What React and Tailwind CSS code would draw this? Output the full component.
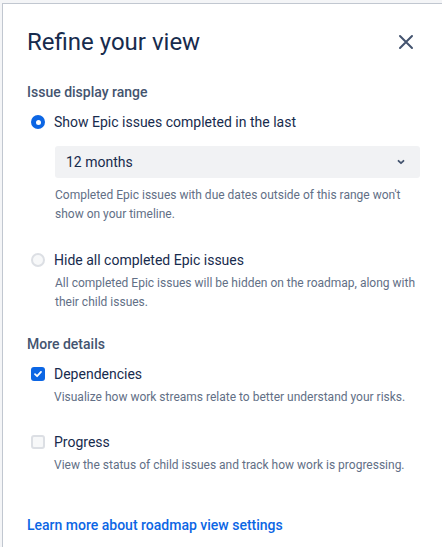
import React from "react";

const font = { fontFamily: 'Roboto, "Liberation Sans", sans-serif' };

function Radio({ checked }) {
  return checked ? (
    <span className="flex h-[14px] w-[14px] items-center justify-center rounded-full bg-[#0c66e4]">
      <span className="h-[5px] w-[5px] rounded-full bg-white" />
    </span>
  ) : (
    <span className="h-[14px] w-[14px] rounded-full border-2 border-[#dcdfe4] bg-[#f7f8f9]" />
  );
}

function Checkbox({ checked }) {
  return checked ? (
    <span className="flex h-[14px] w-[14px] items-center justify-center rounded-[3px] bg-[#0c66e4]">
      <svg width="10" height="10" viewBox="0 0 10 10" fill="none">
        <path d="M2 5.2 4.1 7.2 8 2.9" stroke="white" strokeWidth="1.8" strokeLinecap="round" strokeLinejoin="round" />
      </svg>
    </span>
  ) : (
    <span className="h-[14px] w-[14px] rounded-[3px] border-2 border-[#dcdfe4] bg-[#f7f8f9]" />
  );
}

function OptionRow({ control, label }) {
  return (
    <div className="flex h-[20px] items-center">
      <div className="flex w-[27px] items-center pl-[4px]">{control}</div>
      <span className="text-[14px] leading-[20px] text-[#172b4d]">{label}</span>
    </div>
  );
}

function Helper({ children, className = "" }) {
  return (
    <p className={"pl-[27px] text-[12px] leading-[19px] text-[#626f86] " + className}>
      {children}
    </p>
  );
}

export default function App() {
  return (
    <div className="h-[547px] w-[442px] overflow-hidden bg-[#f4f5f7] pt-[3px] pl-[2px]" style={font}>
      <div className="h-full border-t border-l border-[#c1c7d0] bg-white pl-[24px] pr-[22px] pt-[22px]">
        {/* header */}
        <div className="flex h-[32px] items-center justify-between">
          <h1 className="text-[24px] leading-[32px] font-normal text-[#172b4d]">Refine your view</h1>
          <button type="button" className="mr-[6px] text-[#44546f]">
            <svg width="16" height="16" viewBox="0 0 16 16" fill="none">
              <path d="M2 2 14 14M14 2 2 14" stroke="currentColor" strokeWidth="2" strokeLinecap="round" />
            </svg>
          </button>
        </div>

        {/* issue display range */}
        <h2 className="mt-[24px] text-[14px] leading-[20px] font-medium text-[#44546f]">Issue display range</h2>
        <div className="mt-[10px]">
          <OptionRow control={<Radio checked />} label="Show Epic issues completed in the last" />
        </div>
        <div className="mt-[14px] ml-[28px] flex h-[32px] items-center justify-between rounded-[3px] bg-[#f1f2f4] pl-[11px] pr-[14px]">
          <span className="text-[14px] text-[#172b4d]">12 months</span>
          <svg width="10" height="10" viewBox="0 0 10 10" fill="none">
            <path d="M2.5 3.8 5 6.2 7.5 3.8" stroke="#44546f" strokeWidth="1.8" strokeLinecap="round" strokeLinejoin="round" />
          </svg>
        </div>
        <Helper className="mt-[8px] ml-[1px]">
          Completed Epic issues with due dates outside of this range won't show on your timeline.
        </Helper>

        <div className="mt-[26px]">
          <OptionRow control={<Radio />} label="Hide all completed Epic issues" />
        </div>
        <Helper className="mt-[4px] ml-[1px]">
          All completed Epic issues will be hidden on the roadmap, along with their child issues.
        </Helper>

        {/* more details */}
        <h2 className="mt-[22px] text-[14px] leading-[20px] font-medium text-[#44546f]">More details</h2>
        <div className="mt-[10px]">
          <OptionRow control={<Checkbox checked />} label="Dependencies" />
        </div>
        <Helper className="mt-[4px]">Visualize how work streams relate to better understand your risks.</Helper>

        <div className="mt-[25px]">
          <OptionRow control={<Checkbox />} label="Progress" />
        </div>
        <Helper className="mt-[4px]">View the status of child issues and track how work is progressing.</Helper>

        <a href="#" className="mt-[40px] block text-[14px] leading-[20px] font-medium text-[#0c66e4]">
          Learn more about roadmap view settings
        </a>
      </div>
    </div>
  );
}
